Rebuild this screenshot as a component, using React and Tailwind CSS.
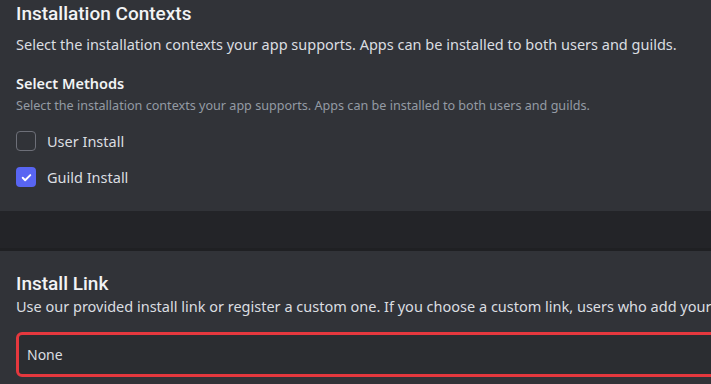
import { useState } from "react";

function Checkbox({ checked, label, onToggle }) {
  return (
    <button type="button" onClick={onToggle} className="flex h-5 items-center gap-[11px] text-left">
      {checked ? (
        <span className="flex h-5 w-5 items-center justify-center rounded-[4px] bg-[#5865f2]">
          <svg width="13" height="13" viewBox="0 0 24 24" fill="none">
            <path d="M5 12.5l4.5 4.5L19 7.5" stroke="#fff" strokeWidth="3.5" strokeLinecap="round" strokeLinejoin="round" />
          </svg>
        </span>
      ) : (
        <span className="h-5 w-5 rounded-[4px] border border-[#6d6f78]" />
      )}
      <span className="text-[14.5px] leading-5 text-[#dbdee1]">{label}</span>
    </button>
  );
}

export default function App() {
  const [user, setUser] = useState(false);
  const [guild, setGuild] = useState(true);

  return (
    <div className="h-[384px] w-[711px] overflow-hidden bg-[#313338] font-['Noto_Sans',sans-serif]">
      <section className="h-[211px] bg-[#313338] px-4">
        <h2 className="whitespace-nowrap pt-[2px] font-['Roboto',sans-serif] text-[19px] leading-6 font-medium text-[#f2f3f5]">
          Installation Contexts
        </h2>
        <p className="mt-2 whitespace-nowrap text-[14.5px] leading-5 text-[#dbdee1]">
          Select the installation contexts your app supports. Apps can be installed to both users and guilds.
        </p>
        <h3 className="mt-[19px] whitespace-nowrap text-[14.5px] leading-5 font-semibold text-[#f2f3f5]">Select Methods</h3>
        <p className="mt-[5px] whitespace-nowrap text-[12.6px] leading-4 text-[#949ba4]">
          Select the installation contexts your app supports. Apps can be installed to both users and guilds.
        </p>
        <div className="mt-[17px] flex flex-col gap-4">
          <Checkbox checked={user} label="User Install" onToggle={() => setUser(!user)} />
          <Checkbox checked={guild} label="Guild Install" onToggle={() => setGuild(!guild)} />
        </div>
      </section>

      <div className="h-[40px] border-b-[3px] border-[#1f2023] bg-[#232428]" />

      <section className="px-4 pt-[21px]">
        <h2 className="whitespace-nowrap font-['Roboto',sans-serif] text-[19px] leading-6 font-medium text-[#f2f3f5]">Install Link</h2>
        <p className="whitespace-nowrap text-[14.5px] leading-5 text-[#dbdee1]">
          Use our provided install link or register a custom one. If you choose a custom link, users who add your app will be redirected there.
        </p>
        <div className="mt-4 flex h-[45px] w-[720px] items-center rounded-[6px] border-[3px] border-[#e5383e] bg-[#2b2d31] px-[8px]">
          <span className="text-[14px] text-[#dbdee1]">None</span>
        </div>
      </section>
    </div>
  );
}
